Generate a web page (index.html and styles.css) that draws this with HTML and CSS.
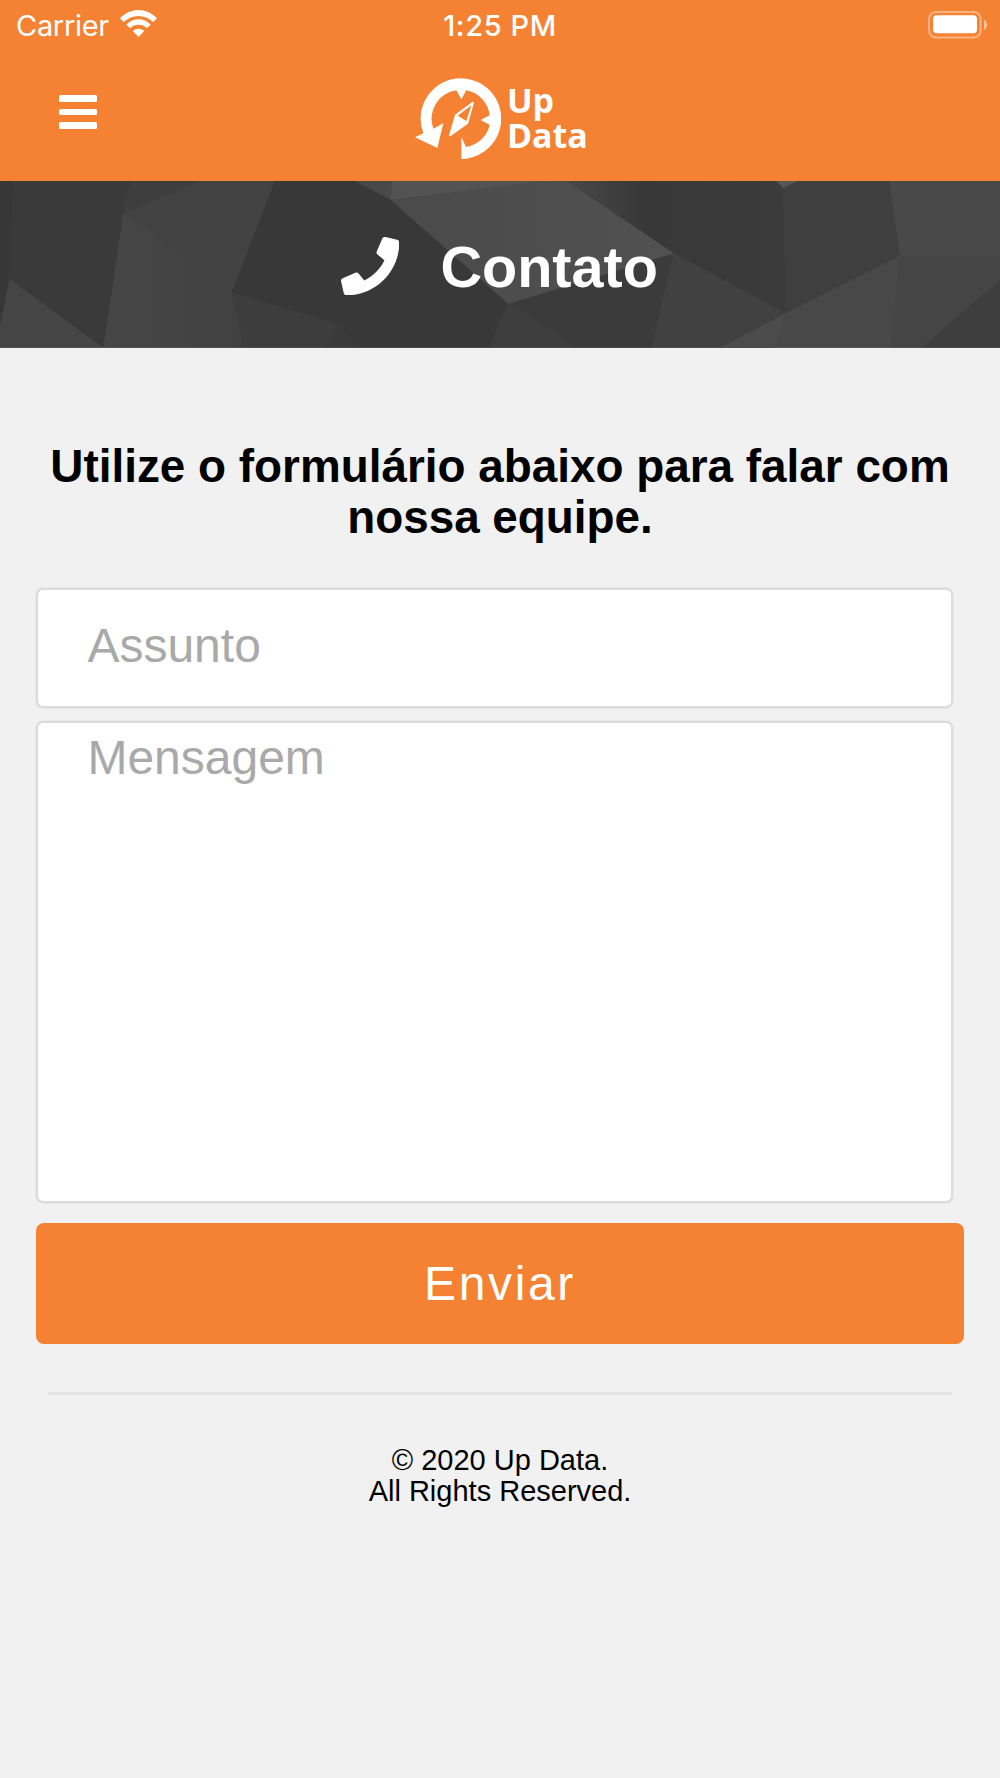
FILE: index.html
```html
<!DOCTYPE html>
<html lang="pt-BR">
<head>
<meta charset="utf-8">
<title>Up Data - Contato</title>
<link rel="stylesheet" href="styles.css">
</head>
<body>
<header class="topbar">
  <div class="status">
    <div class="status-left">
      <span class="carrier">Carrier</span>
      <svg class="wifi" viewBox="0 0 37 27"><path d="M0 8.3C10.5-2.7 26.500-2.700 37 8.300L33.300 12C25 4 12 4 3.700 12ZM6.300 14.500C13.300 7.600 23.700 7.600 30.700 14.500L27 18.200C22 13.700 15 13.700 10 18.200ZM12.800 21C16.100 18.100 20.900 18.100 24.200 21L18.500 27Z"/></svg>
    </div>
    <span class="time">1:25 PM</span>
    <div class="status-right">
      <svg class="battery" viewBox="0 0 60 28"><rect class="battery-shell" x="1.100" y="1" width="51.500" height="25.500" rx="7"/><rect x="5" y="4.300" width="44" height="18" rx="3.700"/><path class="battery-tip" d="M56 8.500c4 2 4 8.500 0 10.500z"/></svg>
    </div>
  </div>
  <nav class="nav">
    <button class="menu" aria-label="Menu"><span></span><span></span><span></span></button>
    <a class="brand">
      <svg class="brand-mark" viewBox="43 38 260 244"><path d="M182 281A121 121 0 1 0 68 204L43 216L110 248L128 174L98 190A86 86 0 0 1 167 75L182 102L197 75A86 86 0 0 1 267 150L240 164L267 178A86 86 0 0 1 196 245L182 214Z"/><path fill-rule="evenodd" d="M216 109L163 148L145 210Q145 214 149 213L202 175L220 112Q219 109 216 109ZM212 120L197 167L171 151Z"/></svg>
      <span class="brand-name">Up<br>Data</span>
    </a>
  </nav>
</header>
<section class="hero">
  <svg class="hero-bg" viewBox="0 18 3000 500" preserveAspectRatio="none">
    <defs>
      <linearGradient id="shade"><stop offset="0" stop-color="#484848"/><stop offset=".35" stop-color="#383838"/><stop offset="1" stop-color="#3b3b3b"/></linearGradient>
      <linearGradient id="facet"><stop offset="0" stop-color="#464646"/><stop offset="1" stop-color="#414141"/></linearGradient>
      <linearGradient id="light"><stop offset="0" stop-color="#4a4a4a"/><stop offset="1" stop-color="#515151"/></linearGradient>
    </defs>
    <rect y="18" width="3000" height="500" fill="#424242"/>
    <path fill="url(#facet)" d="M370 115L310 518H730L695 352Z"/>
    <path fill="#3a3a3a" d="M0 18H390L370 115L310 518L28 312Z"/>
    <path fill="#373737" d="M0 18H38L28 312L0 455Z"/>
    <path fill="#454545" d="M28 312L310 518H0V455Z"/>
    <path fill="#3e3e3e" d="M390 18H600L370 115Z"/>
    <path fill="#383838" d="M825 18H1065L1173 75L1525 387L1495 450L1470 518H1075L1018 450L695 352Z"/>
    <path fill="#3d3d3d" d="M695 352L1018 450L975 518H730Z"/>
    <path fill="#3a3a3a" d="M1018 450L1075 518H975Z"/>
    <path fill="#494949" d="M1065 18H1175L1173 75Z"/>
    <path fill="#535353" d="M1175 18H1620L1500 35L1173 75Z"/>
    <path fill="url(#light)" d="M1173 75L1500 35L1620 18H1700L2022 235L1525 387Z"/>
    <path fill="url(#shade)" d="M1700 18H2328L2350 40L2357 415L2022 235Z"/>
    <path fill="#555" d="M2328 18H2395L2350 40Z"/>
    <path fill="#3f3f3f" d="M2395 18H2668L2700 243L2357 415L2350 40Z"/>
    <path fill="#3b3b3b" d="M1525 387L2022 235L1955 518H1725Z"/>
    <path fill="#3e3e3e" d="M1525 387L1725 518H1470Z"/>
    <path fill="#414141" d="M2022 235L2357 415L2160 518H1955Z"/>
    <path fill="#484848" d="M2357 415L2700 243L2673 518H2160Z"/>
    <path fill="#4b4b4b" d="M2357 415L2325 518H2160Z"/>
    <path fill="#494949" d="M2668 18H3000V243H2700Z"/>
    <path fill="#454545" d="M2700 243H3000V315L2765 518H2673Z"/>
    <path fill="#3e3e3e" d="M3000 315V518H2765Z"/>
  </svg>
  <div class="hero-title">
    <svg class="phone" viewBox="0 0 512 512"><path d="M493.400 24.600l-104-24c-11.300-2.600-22.900 3.300-27.500 13.900l-48 112c-4.200 9.800-1.400 21.300 6.900 28l60.600 49.600c-36 76.700-98.900 140.500-177.200 177.200l-49.600-60.600c-6.800-8.300-18.200-11.100-28-6.900l-112 48C3.900 366.500-2 378.100.6 389.400l24 104C27.100 504.200 36.700 512 48 512c256.100 0 464-207.500 464-464 0-11.200-7.700-20.900-18.600-23.400z"/></svg>
    <h1>Contato</h1>
  </div>
</section>
<main class="content">
  <h2>Utilize o formulário abaixo para falar com nossa equipe.</h2>
  <form class="form">
    <input class="field subject" type="text" placeholder="Assunto">
    <textarea class="field message" placeholder="Mensagem"></textarea>
    <button class="submit" type="button">Enviar</button>
  </form>
  <hr>
  <footer>© 2020 Up Data.<br>All Rights Reserved.</footer>
</main>
</body>
</html>
```
FILE: styles.css
```css
* { box-sizing: border-box; }
body {
  margin: 0;
  min-height: 1778px;
  background: #f1f1f1;
  color: #000;
  font-family: "Liberation Sans", Arial, sans-serif;
}
svg { display: block; fill: #fff; }
.topbar { height: 181px; background: #f58233; color: #fff; }
.status {
  display: grid;
  grid-template-columns: 1fr auto 1fr;
  align-items: start;
  height: 50px;
  padding: 0 12px 0 16px;
  font: 400 29px/36px Inter, sans-serif;
}
.status-left { display: flex; gap: 11px; padding-top: 7px; }
.carrier { padding-top: 1px; letter-spacing: -.3px; }
.wifi { width: 37px; height: 27px; margin-top: 3px; }
.time { padding: 8px 4px 0 0; font-weight: 500; font-size: 29px; letter-spacing: .6px; }
.status-right { display: flex; justify-content: flex-end; padding-top: 11px; }
.battery { width: 60px; height: 28px; }
.battery-shell { fill: none; stroke: #fff; stroke-width: 2; opacity: .4; }
.battery-tip { opacity: .5; }
.nav {
  display: grid;
  grid-template-columns: 1fr auto 1fr;
  align-items: start;
  padding: 0 59px;
}
.menu {
  display: grid;
  gap: 7px;
  width: 38px;
  margin-top: 45px;
  padding: 0;
  border: 0;
  background: none;
}
.menu span { height: 6.500px; border-radius: 1.500px; background: #fff; }
.brand { display: flex; width: 171px; padding-top: 27.500px; }
.brand-mark { flex: none; width: 86.700px; height: 81.300px; }
.brand-name {
  margin: 5px 0 0 5.700px;
  font: 700 34px/35.500px "Open Sans", sans-serif;
}
.hero { display: grid; height: 166.700px; }
.hero-bg { grid-area: 1 / 1; width: 100%; height: 100%; }
.hero-title {
  grid-area: 1 / 1;
  z-index: 1;
  display: flex;
  justify-content: center;
  align-items: flex-start;
  gap: 41px;
  padding: 56px 1px 0 0;
}
.phone { width: 58.300px; height: 58.300px; }
h1 { margin: 0; color: #fff; font-size: 57.600px; line-height: 60px; }
.content { padding: 93px 36px 0; }
h2 {
  margin: 0;
  font-size: 45.850px;
  line-height: 51px;
  text-align: center;
}
.form { display: flex; flex-direction: column; margin-top: 45px; }
.field {
  width: 917px;
  margin: 0 0 0 .400px;
  border: 2px solid #dcdcdc;
  border-radius: 7px;
  box-shadow: 0 0 0 .600px #e2e2e2;
  background: #fff;
  color: #000;
  font: 48px/56px "Liberation Sans", Arial, sans-serif;
  outline: 0;
  resize: none;
}
.field::placeholder { color: #a9a9a9; opacity: 1; }
.subject { height: 120px; padding: 0 49px 4px; }
.message { height: 482px; margin-top: 13px; padding: 7px 49px; }
.submit {
  height: 121px;
  margin-top: 20px;
  padding: 2px 0 0;
  border: 0;
  border-radius: 8px;
  background: #f58233;
  color: #fff;
  font: 48px/56px "Liberation Sans", Arial, sans-serif;
  letter-spacing: 2.670px;
}
hr { height: 3px; margin: 48px 12px 0; border: 0; background: #e5e5e5; }
footer {
  margin-top: 50px;
  font-size: 29px;
  line-height: 31.330px;
  text-align: center;
}
```
